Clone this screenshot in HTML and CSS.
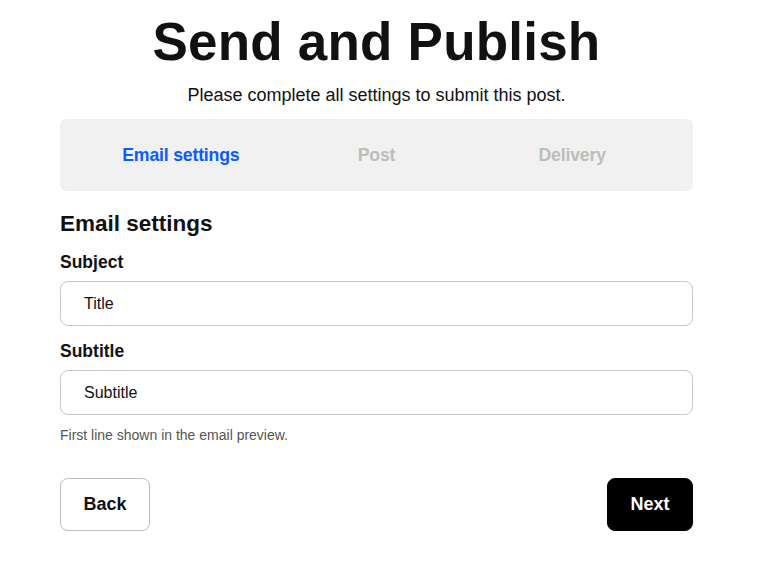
FILE: index.html
```html
<!DOCTYPE html>
<html lang="en">
<head>
<meta charset="utf-8">
<title>Send and Publish</title>
<link rel="stylesheet" href="styles.css">
</head>
<body>
<main class="page">
  <h1 class="title">Send and Publish</h1>
  <p class="lead">Please complete all settings to submit this post.</p>
  <nav class="steps">
    <span class="step active">Email settings</span>
    <span class="step">Post</span>
    <span class="step">Delivery</span>
  </nav>
  <section class="form">
    <h2 class="section-title">Email settings</h2>
    <label class="field-label" for="subject">Subject</label>
    <input class="field" id="subject" type="text" value="Title">
    <label class="field-label second" for="subtitle">Subtitle</label>
    <input class="field" id="subtitle" type="text" value="Subtitle">
    <p class="hint">First line shown in the email preview.</p>
  </section>
  <div class="actions">
    <button class="btn btn-back" type="button">Back</button>
    <button class="btn btn-next" type="button">Next</button>
  </div>
</main>
</body>
</html>
```

FILE: styles.css
```css
* { box-sizing: border-box; }
html, body { margin: 0; padding: 0; background: #fff; }
body {
  font-family: "Liberation Sans", Arial, sans-serif;
  color: #111;
  padding: 0 77px 0 60px;
}
.page { display: flex; flex-direction: column; width: 633px; }
.title {
  margin: 12px 0 0;
  font-size: 53px;
  line-height: 60px;
  font-weight: 700;
  text-align: center;
  letter-spacing: 0.2px;
}
.lead {
  margin: 11px 0 0;
  font-size: 18px;
  line-height: 24px;
  text-align: center;
  color: #111;
}
.steps {
  margin-top: 12px;
  height: 72px;
  background: #f1f1f1;
  border-radius: 6px;
  padding: 0 23px;
  display: grid;
  grid-template-columns: 1fr 1fr 1fr;
  align-items: center;
  justify-items: center;
}
.step { font-size: 17.7px; font-weight: 700; color: #bdbdbd; letter-spacing: -0.2px; }
.step.active { color: #0a5cff; }
.form { display: flex; flex-direction: column; }
.section-title {
  margin: 20px 0 0;
  font-size: 22.5px;
  line-height: 26px;
  font-weight: 700;
}
.field-label {
  margin-top: 15px;
  font-size: 17.5px;
  line-height: 20px;
  font-weight: 700;
}
.field-label.second { margin-top: 15px; }
.field {
  margin-top: 9px;
  height: 45px;
  width: 100%;
  border: 1px solid #c8c8c8;
  border-radius: 8px;
  padding: 0 23px;
  font-family: "Liberation Sans", Arial, sans-serif;
  font-size: 16px;
  color: #111;
  background: #fff;
}
.hint {
  margin: 12px 0 0;
  font-size: 14px;
  line-height: 16px;
  color: #555;
}
.actions {
  margin-top: 35px;
  display: flex;
  justify-content: space-between;
}
.btn {
  height: 53px;
  border-radius: 8px;
  font-family: "Liberation Sans", Arial, sans-serif;
  font-size: 18px;
  font-weight: 700;
  cursor: pointer;
}
.btn-back { width: 90px; background: #fff; border: 1px solid #bdbdbd; color: #111; }
.btn-next { width: 86px; background: #000; border: 1px solid #000; color: #fff; }
```
